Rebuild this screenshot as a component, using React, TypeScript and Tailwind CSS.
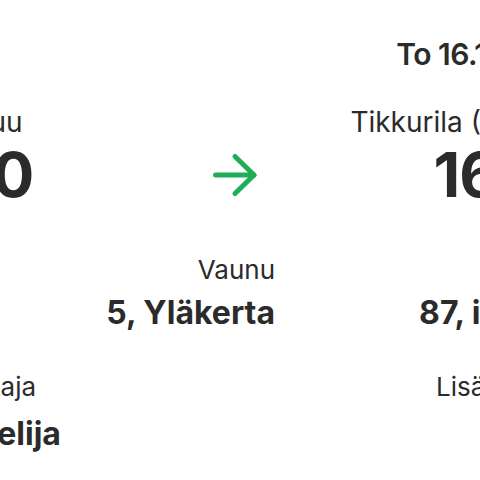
import React from "react";

const Arrow = () => (
  <svg width="50" height="50" viewBox="0 0 50 50" fill="none" stroke="#1fae57" strokeWidth="5" strokeLinecap="round" strokeLinejoin="round">
    <path d="M5.5 25H44" />
    <path d="M25 6.5 44 25 25 43.5" />
  </svg>
);

export default function App() {
  return (
    <div className="w-[480px] h-[480px] overflow-hidden bg-white text-[#2b2b2b] font-['Inter',sans-serif]">
      <div className="-ml-[95px] w-[677px] whitespace-nowrap">
        {/* Date */}
        <div className="pt-[36px] text-right text-[30px] font-semibold leading-[36px] tracking-[-0.5px]">
          To 16.11.2023
        </div>

        {/* Stations */}
        <div className="mt-[33px] flex items-start">
          <div className="w-[305px] text-left">
            <div className="ml-[4px] text-[28px] leading-[34px]">Joensuu</div>
            <div className="-ml-[8px] text-[62px] font-bold leading-[72px] tracking-[-1px]">9.50</div>
          </div>
          <div className="mt-[45px]">
            <Arrow />
          </div>
          <div className="flex-1 text-right">
            <div className="text-[28px] leading-[34px]">Tikkurila (Vantaa)</div>
            <div className="-mr-[11px] text-[62px] font-bold leading-[72px] tracking-[-1px]">16.25</div>
          </div>
        </div>

        {/* Seat */}
        <div className="mt-[43px] flex items-start">
          <div className="w-[200px] text-left">
            <div className="text-[26px] leading-[32px]">Juna</div>
            <div className="mt-[7px] text-[32px] font-bold leading-[40px]">IC 8</div>
          </div>
          <div className="w-[170px] text-right">
            <div className="text-[26px] leading-[32px]">Vaunu</div>
            <div className="mt-[7px] text-[32px] font-bold leading-[40px]">5, Yläkerta</div>
          </div>
          <div className="flex-1 mr-[6px] text-right">
            <div className="text-[26px] leading-[32px]">Paikka</div>
            <div className="mt-[7px] text-[32px] font-bold leading-[40px]">87, ikkuna</div>
          </div>
        </div>

        {/* Passenger */}
        <div className="mt-[38px] flex items-start justify-between">
          <div className="text-left">
            <div className="-ml-[3px] text-[26px] leading-[32px]">Matkustaja</div>
            <div className="ml-[3px] mt-[11px] text-[32px] font-bold leading-[40px]">Opiskelija</div>
          </div>
          <div className="text-right">
            <div className="text-[26px] leading-[32px]">Lisäpalvelut</div>
            <div className="mt-[11px] text-[32px] font-bold leading-[40px]">–</div>
          </div>
        </div>
      </div>
    </div>
  );
}
